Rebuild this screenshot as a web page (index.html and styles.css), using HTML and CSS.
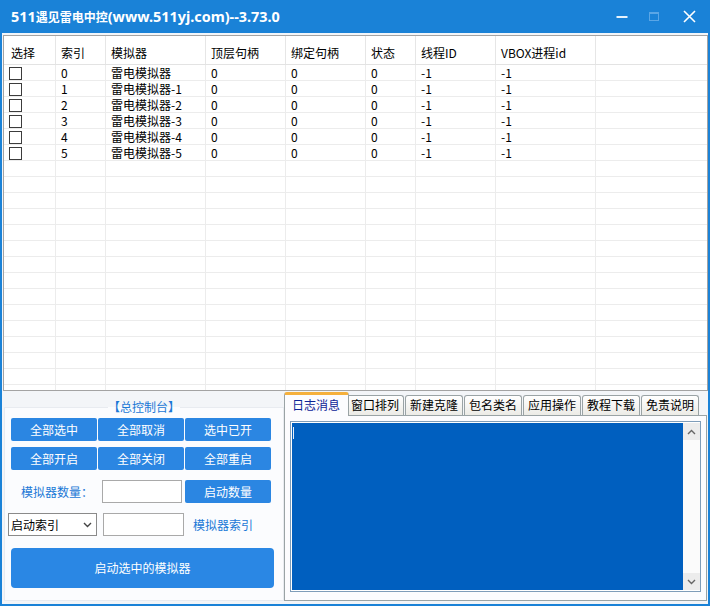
FILE: index.html
```html
<!DOCTYPE html>
<html lang="zh-CN">
<head>
<meta charset="utf-8">
<title>511遇见雷电中控</title>
<link rel="stylesheet" href="styles.css">
</head>
<body>
<div class="window">
  <header class="titlebar">
    <div class="title">511<span class="cjk">遇见雷电中控</span>(www.511yj.com)--3.73.0</div>
    <div class="controls">
      <span class="ctl min"><svg width="12" height="12" viewBox="0 0 12 12"><rect x="0.5" y="5" width="11" height="2" fill="#e6f2fc"/></svg></span>
      <span class="ctl max"><svg width="12" height="12" viewBox="0 0 12 12"><rect x="1.5" y="1.5" width="9" height="8" fill="none" stroke="#5aa6e6" stroke-width="1"/><rect x="1.5" y="1.5" width="9" height="1.5" fill="#5aa6e6"/></svg></span>
      <span class="ctl close"><svg width="13" height="13" viewBox="0 0 13 13"><path d="M1 1L12 12M12 1L1 12" stroke="#ffffff" stroke-width="1.6"/></svg></span>
    </div>
  </header>
  <main class="client">
    <div class="grid">
      <div class="row head">
        <div class="c c1">选择</div><div class="c c2">索引</div><div class="c c3">模拟器</div><div class="c c4">顶层句柄</div><div class="c c5">绑定句柄</div><div class="c c6">状态</div><div class="c c7">线程ID</div><div class="c c8">VBOX进程id</div><div class="c c9"></div>
      </div>
      <div class="row"><div class="c c1"><span class="chk"></span></div><div class="c c2">0</div><div class="c c3">雷电模拟器</div><div class="c c4">0</div><div class="c c5">0</div><div class="c c6">0</div><div class="c c7">-1</div><div class="c c8">-1</div><div class="c c9"></div></div>
      <div class="row"><div class="c c1"><span class="chk"></span></div><div class="c c2">1</div><div class="c c3">雷电模拟器-1</div><div class="c c4">0</div><div class="c c5">0</div><div class="c c6">0</div><div class="c c7">-1</div><div class="c c8">-1</div><div class="c c9"></div></div>
      <div class="row"><div class="c c1"><span class="chk"></span></div><div class="c c2">2</div><div class="c c3">雷电模拟器-2</div><div class="c c4">0</div><div class="c c5">0</div><div class="c c6">0</div><div class="c c7">-1</div><div class="c c8">-1</div><div class="c c9"></div></div>
      <div class="row"><div class="c c1"><span class="chk"></span></div><div class="c c2">3</div><div class="c c3">雷电模拟器-3</div><div class="c c4">0</div><div class="c c5">0</div><div class="c c6">0</div><div class="c c7">-1</div><div class="c c8">-1</div><div class="c c9"></div></div>
      <div class="row"><div class="c c1"><span class="chk"></span></div><div class="c c2">4</div><div class="c c3">雷电模拟器-4</div><div class="c c4">0</div><div class="c c5">0</div><div class="c c6">0</div><div class="c c7">-1</div><div class="c c8">-1</div><div class="c c9"></div></div>
      <div class="row"><div class="c c1"><span class="chk"></span></div><div class="c c2">5</div><div class="c c3">雷电模拟器-5</div><div class="c c4">0</div><div class="c c5">0</div><div class="c c6">0</div><div class="c c7">-1</div><div class="c c8">-1</div><div class="c c9"></div></div>
      <div class="row"><div class="c c1"></div><div class="c c2"></div><div class="c c3"></div><div class="c c4"></div><div class="c c5"></div><div class="c c6"></div><div class="c c7"></div><div class="c c8"></div><div class="c c9"></div></div>
      <div class="row"><div class="c c1"></div><div class="c c2"></div><div class="c c3"></div><div class="c c4"></div><div class="c c5"></div><div class="c c6"></div><div class="c c7"></div><div class="c c8"></div><div class="c c9"></div></div>
      <div class="row"><div class="c c1"></div><div class="c c2"></div><div class="c c3"></div><div class="c c4"></div><div class="c c5"></div><div class="c c6"></div><div class="c c7"></div><div class="c c8"></div><div class="c c9"></div></div>
      <div class="row"><div class="c c1"></div><div class="c c2"></div><div class="c c3"></div><div class="c c4"></div><div class="c c5"></div><div class="c c6"></div><div class="c c7"></div><div class="c c8"></div><div class="c c9"></div></div>
      <div class="row"><div class="c c1"></div><div class="c c2"></div><div class="c c3"></div><div class="c c4"></div><div class="c c5"></div><div class="c c6"></div><div class="c c7"></div><div class="c c8"></div><div class="c c9"></div></div>
      <div class="row"><div class="c c1"></div><div class="c c2"></div><div class="c c3"></div><div class="c c4"></div><div class="c c5"></div><div class="c c6"></div><div class="c c7"></div><div class="c c8"></div><div class="c c9"></div></div>
      <div class="row"><div class="c c1"></div><div class="c c2"></div><div class="c c3"></div><div class="c c4"></div><div class="c c5"></div><div class="c c6"></div><div class="c c7"></div><div class="c c8"></div><div class="c c9"></div></div>
      <div class="row"><div class="c c1"></div><div class="c c2"></div><div class="c c3"></div><div class="c c4"></div><div class="c c5"></div><div class="c c6"></div><div class="c c7"></div><div class="c c8"></div><div class="c c9"></div></div>
      <div class="row"><div class="c c1"></div><div class="c c2"></div><div class="c c3"></div><div class="c c4"></div><div class="c c5"></div><div class="c c6"></div><div class="c c7"></div><div class="c c8"></div><div class="c c9"></div></div>
      <div class="row"><div class="c c1"></div><div class="c c2"></div><div class="c c3"></div><div class="c c4"></div><div class="c c5"></div><div class="c c6"></div><div class="c c7"></div><div class="c c8"></div><div class="c c9"></div></div>
      <div class="row"><div class="c c1"></div><div class="c c2"></div><div class="c c3"></div><div class="c c4"></div><div class="c c5"></div><div class="c c6"></div><div class="c c7"></div><div class="c c8"></div><div class="c c9"></div></div>
      <div class="row"><div class="c c1"></div><div class="c c2"></div><div class="c c3"></div><div class="c c4"></div><div class="c c5"></div><div class="c c6"></div><div class="c c7"></div><div class="c c8"></div><div class="c c9"></div></div>
      <div class="row"><div class="c c1"></div><div class="c c2"></div><div class="c c3"></div><div class="c c4"></div><div class="c c5"></div><div class="c c6"></div><div class="c c7"></div><div class="c c8"></div><div class="c c9"></div></div>
      <div class="row"><div class="c c1"></div><div class="c c2"></div><div class="c c3"></div><div class="c c4"></div><div class="c c5"></div><div class="c c6"></div><div class="c c7"></div><div class="c c8"></div><div class="c c9"></div></div>
      <div class="row"><div class="c c1"></div><div class="c c2"></div><div class="c c3"></div><div class="c c4"></div><div class="c c5"></div><div class="c c6"></div><div class="c c7"></div><div class="c c8"></div><div class="c c9"></div></div>
    </div>

    <div class="bottom">
      <fieldset class="group">
        <legend class="legend">【总控制台】</legend>
        <div class="btns">
          <button class="btn">全部选中</button>
          <button class="btn">全部取消</button>
          <button class="btn">选中已开</button>
          <button class="btn">全部开启</button>
          <button class="btn">全部关闭</button>
          <button class="btn">全部重启</button>
        </div>
        <div class="line">
          <label class="lbl lbl-count">模拟器数量：</label>
          <input class="txt txt-count" type="text">
          <button class="btn btn-count">启动数量</button>
        </div>
        <div class="line line-index">
          <div class="combo">
            <select class="sel"><option>启动索引</option></select>
            <svg class="chev" width="9" height="6" viewBox="0 0 9 6"><path d="M1 1l3.5 3.5L8 1" fill="none" stroke="#444" stroke-width="1.4"/></svg>
          </div>
          <input class="txt txt-index" type="text">
          <label class="lbl lbl-index">模拟器索引</label>
        </div>
        <button class="btn btn-big">启动选中的模拟器</button>
      </fieldset>

      <div class="tabctl">
        <div class="tabstrip">
          <div class="tab active">日志消息</div>
          <div class="tab">窗口排列</div>
          <div class="tab">新建克隆</div>
          <div class="tab">包名类名</div>
          <div class="tab">应用操作</div>
          <div class="tab">教程下载</div>
          <div class="tab">免责说明</div>
        </div>
        <div class="tabpanel">
          <div class="logbox">
            <div class="logtext"><span class="caret"></span></div>
            <div class="vscroll">
              <span class="sbtn"><svg width="9" height="6" viewBox="0 0 9 6"><path d="M1 5l3.5-3.5L8 5" fill="none" stroke="#666" stroke-width="1.4"/></svg></span>
              <span class="track"></span>
              <span class="sbtn"><svg width="9" height="6" viewBox="0 0 9 6"><path d="M1 1l3.5 3.5L8 1" fill="none" stroke="#666" stroke-width="1.4"/></svg></span>
            </div>
          </div>
        </div>
      </div>
    </div>
  </main>
</div>
</body>
</html>
```

FILE: styles.css
```css
* { box-sizing: border-box; }
html, body { margin: 0; padding: 0; }
body {
  width: 710px;
  height: 606px;
  overflow: hidden;
  background: #1a82d7;
  font-family: "Noto Sans CJK SC", "Noto Sans", sans-serif;
  font-size: 12px;
  color: #000;
}
.window { width: 710px; height: 606px; display: flex; flex-direction: column; }

/* title bar */
.titlebar {
  height: 33px;
  flex: none;
  display: flex;
  align-items: center;
  justify-content: space-between;
  color: #fff;
}
.title {
  font-family: "Noto Sans", "Noto Sans CJK SC", sans-serif;
  font-weight: 700;
  font-size: 14.4px;
  line-height: 16px;
  padding-left: 11px;
  padding-top: 1px;
  white-space: nowrap;
}
.title .cjk { font-family: "Noto Sans CJK SC", sans-serif; font-size: 12px; }
.controls { display: flex; height: 33px; margin-right: 3px; }
.ctl { display: flex; align-items: center; justify-content: center; height: 100%; }
.ctl.min { width: 30px; }
.ctl.max { width: 34px; }
.ctl.close { width: 36px; }

/* client */
.client {
  flex: 1;
  margin: 0 2px 2px;
  background: #f3f5f8;
  display: flex;
  flex-direction: column;
  min-height: 0;
}

/* grid */
.grid {
  flex: none;
  margin: 2px 0 0 1px;
  height: 356px;
  border: 1px solid #a3a3a3;
  background: #fff;
  overflow: hidden;
}
.row { display: flex; height: 16px; border-bottom: 1px solid #ececec; }
.row.head { height: 29px; border-bottom: 1px solid #e3e3e3; }
.c {
  flex: none;
  height: 100%;
  border-right: 1px solid #ececec;
  padding-left: 5px;
  line-height: 15px;
  white-space: nowrap;
  overflow: hidden;
}
.head .c { line-height: 20px; padding-top: 7px; border-right-color: #e6e6e6; }
.head .c1 { padding-left: 7px; }
.c1 { width: 52px; }
.c2 { width: 50px; }
.c3 { width: 100px; }
.c4 { width: 80px; }
.c5 { width: 80px; }
.c6 { width: 50px; }
.c7 { width: 80px; }
.c8 { width: 100px; }
.c9 { flex: 1; border-right: none; }
.chk {
  display: block;
  width: 13px;
  height: 13px;
  border: 1px solid #3c3c3c;
  background: #fff;
  margin-top: 2px;
}

/* bottom area */
.bottom { flex: 1; display: flex; min-height: 0; }

.group {
  margin: 9px 0 3px 2px;
  width: 280px;
  min-width: 0;
  border: 1px solid #e8ebf0;
  padding: 4px 6px 0 6px;
  background: #fbfcfe;
}
.legend {
  margin: 0 auto;
  padding: 0;
  line-height: 14px;
  color: #1a78d6;
  font-size: 12px;
}
.btns {
  display: grid;
  grid-template-columns: repeat(3, 86px);
  column-gap: 1px;
  row-gap: 6px;
}
.btn {
  height: 23px;
  margin: 0;
  padding: 0;
  border: none;
  border-radius: 2px;
  background: #2b86e2;
  color: #fff;
  font-family: "Noto Sans CJK SC", sans-serif;
  font-size: 12px;
  line-height: 23px;
}
.line { display: flex; align-items: center; height: 23px; margin-top: 10px; }
.lbl { color: #1a78d6; font-size: 12px; white-space: nowrap; }
.lbl-count { width: 91px; padding-left: 10px; }
.txt {
  height: 23px;
  margin: 0;
  padding: 0 3px;
  border: 1px solid #a9a9a9;
  background: #fff;
  font: 12px "Noto Sans CJK SC", sans-serif;
}
.txt-count { width: 80px; margin-right: 3px; }
.btn-count { width: 86px; }
.combo { display: grid; align-items: center; width: 89px; height: 23px; margin-left: -3px; }
.sel, .chev { grid-area: 1 / 1; }
.sel {
  appearance: none;
  -webkit-appearance: none;
  width: 89px;
  height: 23px;
  margin: 0;
  padding: 0 0 0 2px;
  border: 1px solid #8a8a8a;
  border-radius: 0;
  background: #fff;
  color: #000;
  font: 12px "Noto Sans CJK SC", sans-serif;
}
.chev { justify-self: end; margin-right: 5px; pointer-events: none; }
.txt-index { width: 81px; margin-left: 6px; }
.lbl-index { margin-left: 9px; }
.btn-big {
  display: block;
  width: 263px;
  height: 40px;
  margin-top: 12px;
  border-radius: 4px;
  background: #2a87e4;
  line-height: 40px;
}

/* tabs */
.tabctl {
  flex: 1;
  margin: 1px 1px 3px 0;
  display: flex;
  flex-direction: column;
  min-width: 0;
}
.tabstrip { display: flex; align-items: flex-end; height: 23px; flex: none; }
.tab {
  height: 20px;
  padding: 0 4px;
  margin-right: 1px;
  border: 1px solid #9aa3a5;
  border-bottom: none;
  border-radius: 3px 3px 0 0;
  background: linear-gradient(#ffffff, #ecebe6);
  line-height: 18px;
  font-size: 12px;
  white-space: nowrap;
}
.tab.active {
  position: relative;
  z-index: 1;
  height: 24px;
  width: 65px;
  margin-bottom: -1px;
  margin-right: -3px;
  padding: 0 7px;
  background: #fcfcfe;
  color: #0c2496;
  border-top: 3px solid #f5b03c;
  line-height: 19px;
  font-size: 12px;
}
.tabpanel {
  flex: 1;
  border: 1px solid #9aa3a5;
  background: #fcfcfe;
  padding: 5px 5px 8px 5px;
  display: flex;
  min-height: 0;
}
.logbox {
  flex: 1;
  display: flex;
  border: 1px solid #7f9db9;
  padding: 1px 0 1px 1px;
  background: #fff;
}
.logtext { flex: 1; background: #005fbf; }
.caret { display: block; width: 1px; height: 12px; margin: 4px 0 0 1px; background: #e6eef8; }
.vscroll { width: 17px; display: flex; flex-direction: column; background: #fbfbfb; }
.sbtn {
  height: 17px;
  display: flex;
  align-items: center;
  justify-content: center;
  background: #ececec;
}
.track { flex: 1; }
```
